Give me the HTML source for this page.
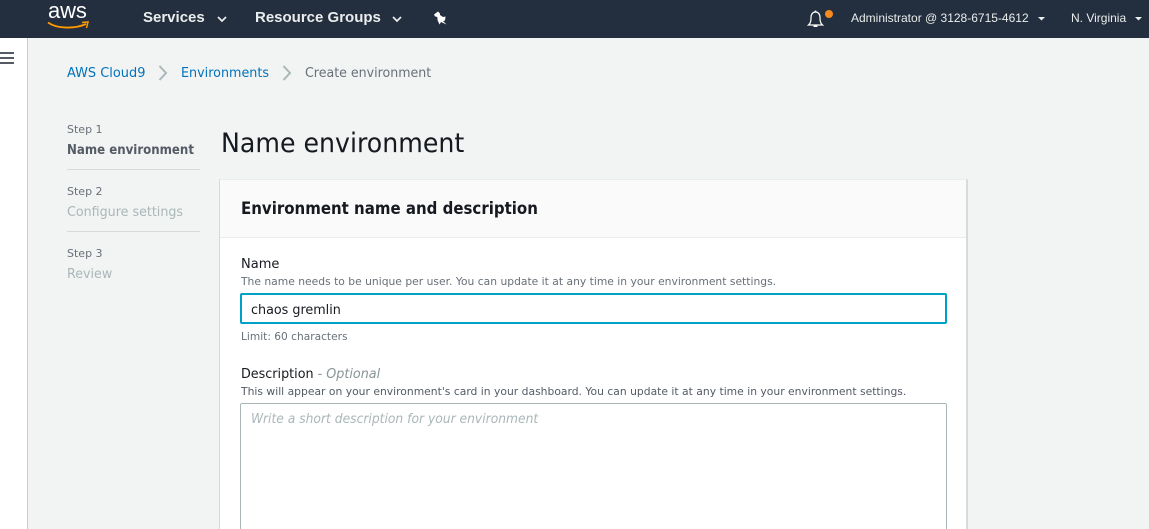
<!DOCTYPE html>
<html><head><meta charset="utf-8">
<style>
html,body{margin:0;padding:0;width:1149px;height:529px;overflow:hidden;background:#f2f3f3;}
body{position:relative;font-family:"DejaVu Sans",sans-serif;color:#16191f;}
.t{position:absolute;white-space:nowrap;line-height:1;transform-origin:0 0;}
.b{position:absolute;}
.nav{font-family:"Liberation Sans",sans-serif;color:#eaeded;}
svg{position:absolute;overflow:visible;}
</style></head><body>
<div class="b" style="left:0;top:0;width:1149px;height:38px;background:#232f3e"></div>
<div class="b" style="left:0;top:38px;width:27px;height:491px;background:#fff;border-right:1px solid #c8cece"></div>
<div class="b" style="left:0;top:52px;width:14px;height:2px;background:#545b64"></div>
<div class="b" style="left:0;top:57px;width:14px;height:2px;background:#545b64"></div>
<div class="b" style="left:0;top:62px;width:14px;height:2px;background:#545b64"></div>

<div class="t nav" style="left:48px;top:0px;font-size:22px;color:#fff;letter-spacing:-.1px">aws</div>
<svg style="left:47px;top:21px" width="42" height="10"><path d="M1 1.5C10 8 28 8 39 3" fill="none" stroke="#f90" stroke-width="1.8"/><path d="M35 1.5L41 1L39.5 7" fill="none" stroke="#f90" stroke-width="1.5"/></svg>
<div class="t nav" style="left:143px;top:10px;font-size:15px;font-weight:bold">Services</div>
<svg style="left:217px;top:16px" width="10" height="6"><path d="M1 1L5 5L9 1" fill="none" stroke="#eaeded" stroke-width="1.7"/></svg>
<div class="t nav" style="left:255px;top:10px;font-size:15px;font-weight:bold">Resource Groups</div>
<svg style="left:392px;top:16px" width="10" height="6"><path d="M1 1L5 5L9 1" fill="none" stroke="#eaeded" stroke-width="1.7"/></svg>
<svg style="left:433px;top:11px" width="14" height="14"><path d="M1 3.5L5 0.5L7 2.5L7 4L10 6L12.5 5.5L12 9.5L10 10L13.5 13.5L8 11L6.5 13.5L4.5 9L4.5 6.5L3 5.5L2 5.5Z" fill="#fff"/></svg>

<svg style="left:807px;top:9px" width="18" height="20"><path d="M1.5 16C4 14 4 11 4 8.5C4 5 6 3 8.5 3C11 3 13 5 13 8.5C13 11 13 14 15.5 16Z" fill="none" stroke="#fff" stroke-width="1.2"/><path d="M6.5 16.5h4v1.5h-4z" fill="#fff"/><circle cx="8.5" cy="2.5" r="1" fill="#fff"/></svg>
<div class="b" style="left:825px;top:10px;width:8px;height:8px;border-radius:50%;background:#f58b1f"></div>
<div class="t nav" style="left:851px;top:12px;font-size:12px">Administrator @ 3128-6715-4612</div>
<svg style="left:1038px;top:17px" width="8" height="4"><path d="M0 0H7L3.5 3.5Z" fill="#eaeded"/></svg>
<div class="t nav" style="left:1071px;top:12px;font-size:12px">N. Virginia</div>
<svg style="left:1135px;top:17px" width="8" height="4"><path d="M0 0H7L3.5 3.5Z" fill="#eaeded"/></svg>

<div class="t" style="left:67px;top:67px;font-size:13px;color:#0073bb;transform:scaleX(.995)">AWS Cloud9</div>
<svg style="left:158px;top:65px" width="10" height="16"><path d="M1.5 1L8 8L1.5 15" fill="none" stroke="#aab7b8" stroke-width="2"/></svg>
<div class="t" style="left:181px;top:67px;font-size:13px;color:#0073bb;transform:scaleX(.98)">Environments</div>
<svg style="left:282px;top:65px" width="10" height="16"><path d="M1.5 1L8 8L1.5 15" fill="none" stroke="#aab7b8" stroke-width="2"/></svg>
<div class="t" style="left:305px;top:67px;font-size:13px;color:#687078;transform:scaleX(.97)">Create environment</div>

<div class="t" style="left:67px;top:124px;font-size:11px;color:#687078">Step 1</div>
<div class="t" style="left:67px;top:144px;font-size:13px;font-weight:bold;color:#545b64;transform:scaleX(.907)">Name environment</div>
<div class="b" style="left:67px;top:169px;width:133px;height:1px;background:#d5dbdb"></div>
<div class="t" style="left:67px;top:186px;font-size:11px;color:#687078">Step 2</div>
<div class="t" style="left:67px;top:206px;font-size:13px;color:#aab7b8;transform:scaleX(.975)">Configure settings</div>
<div class="b" style="left:67px;top:231px;width:133px;height:1px;background:#d5dbdb"></div>
<div class="t" style="left:67px;top:248px;font-size:11px;color:#687078">Step 3</div>
<div class="t" style="left:67px;top:268px;font-size:13px;color:#aab7b8;transform:scaleX(.975)">Review</div>

<div class="t" style="left:221px;top:130px;font-size:27px;transform:scaleX(.935)">Name environment</div>

<div class="b" style="left:219px;top:179px;width:749px;height:350px;background:#fff;border-left:1px solid #d5dbdb;border-right:2px solid #d5dbdb;border-top:1px solid #eaeded;box-sizing:border-box"></div>
<div class="b" style="left:220px;top:180px;width:746px;height:57px;background:#fafafa;border-bottom:1px solid #eaeded"></div>
<div class="t" style="left:241px;top:201px;font-size:17px;font-weight:bold;transform:scaleX(.882)">Environment name and description</div>

<div class="t" style="left:241px;top:258px;font-size:13px">Name</div>
<div class="t" style="left:241px;top:276px;font-size:11px;color:#687078;transform:scaleX(.976)">The name needs to be unique per user. You can update it at any time in your environment settings.</div>
<div class="b" style="left:240px;top:293px;width:707px;height:31px;box-sizing:border-box;background:#fff;border:2px solid #00a1c9;border-radius:2px"></div>
<div class="t" style="left:251px;top:304px;font-size:13px;transform:scaleX(.98)">chaos gremlin</div>
<div class="t" style="left:241px;top:331px;font-size:11px;color:#687078;transform:scaleX(.965)">Limit: 60 characters</div>

<div class="t" style="left:241px;top:368px;font-size:13px;transform:scaleX(.98)">Description <span style="color:#879596;font-style:italic">- Optional</span></div>
<div class="t" style="left:241px;top:386px;font-size:11px;color:#545b64;transform:scaleX(.978)">This will appear on your environment's card in your dashboard. You can update it at any time in your environment settings.</div>
<div class="b" style="left:240px;top:403px;width:707px;height:140px;box-sizing:border-box;background:#fff;border:1px solid #aab7b8;border-radius:2px"></div>
<div class="t" style="left:251px;top:413px;font-size:13px;font-style:italic;color:#aab7b8;transform:scaleX(.947)">Write a short description for your environment</div>
</body></html>
